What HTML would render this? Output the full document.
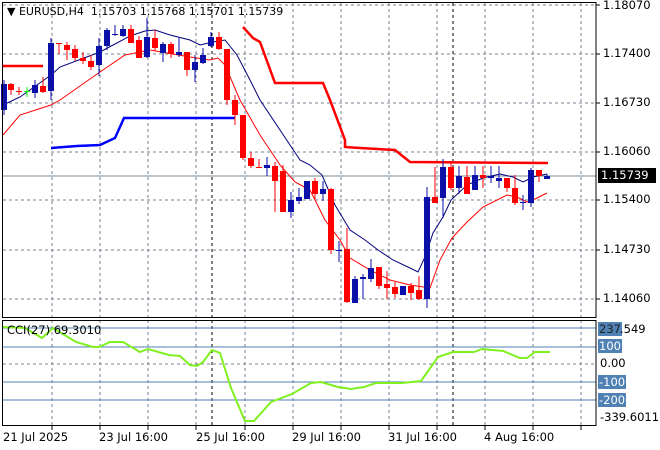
<!DOCTYPE html>
<html><head><meta charset="utf-8"><style>
body{margin:0;background:#fff;width:660px;height:450px;overflow:hidden;font-family:"DejaVu Sans","Liberation Sans",sans-serif;}
.t{position:absolute;font-size:11.5px;color:#000;white-space:nowrap;line-height:13px}
.lb{position:absolute;font-size:11.5px;color:#fff;background:#4f81b4;line-height:14px;padding:0 1px}
</style></head><body>
<svg id="s" width="660" height="450" style="position:absolute;left:0;top:0" shape-rendering="crispEdges"></svg>
<div class="t" style="left:7px;top:5px;font-size:11px">&#9660; EURUSD,H4&nbsp; 1.15703 1.15768 1.15701 1.15739</div>
<div class="t" style="left:603px;top:-1px">1.18070</div>
<div class="t" style="left:603px;top:47px">1.17400</div>
<div class="t" style="left:603px;top:96px">1.16730</div>
<div class="t" style="left:603px;top:145px">1.16060</div>
<div class="t" style="left:603px;top:193px">1.15400</div>
<div class="t" style="left:603px;top:243px">1.14730</div>
<div class="t" style="left:603px;top:292px">1.14060</div>
<div class="t" style="left:598px;top:168px;background:#000;color:#fff;padding:1px 3px;width:52px">1.15739</div>
<div class="t" style="left:7px;top:324px">CCI(27) 69.3010</div>
<div class="lb" style="left:598px;top:322px;color:#222">237</div>
<div class="t" style="left:620px;top:323px">.549</div>
<div class="lb" style="left:598px;top:339px">100</div>
<div class="t" style="left:600px;top:357px">0.00</div>
<div class="lb" style="left:598px;top:375px">-100</div>
<div class="lb" style="left:598px;top:393px">-200</div>
<div class="t" style="left:600px;top:411px">-339.6011</div>
<div class="t" style="left:3px;top:431px">21 Jul 2025</div>
<div class="t" style="left:99px;top:431px">23 Jul 16:00</div>
<div class="t" style="left:196px;top:431px">25 Jul 16:00</div>
<div class="t" style="left:292px;top:431px">29 Jul 16:00</div>
<div class="t" style="left:388px;top:431px">31 Jul 16:00</div>
<div class="t" style="left:484px;top:431px">4 Aug 16:00</div>
<script>
var h='';
var gx=[52,100,148,196,245,293,341,389,437,485,533,581];
var gy=[5,54,103,152,200,250,299];
gx.forEach(function(x){h+='<line x1="'+x+'" y1="3" x2="'+x+'" y2="317" stroke="#7a8290" stroke-dasharray="3,3"/>';h+='<line x1="'+x+'" y1="320" x2="'+x+'" y2="425" stroke="#7a8290" stroke-dasharray="3,3"/>';h+='<line x1="'+x+'" y1="425" x2="'+x+'" y2="430" stroke="#000"/>';});
gy.forEach(function(y){h+='<line x1="3" y1="'+y+'" x2="596" y2="'+y+'" stroke="#7a8290" stroke-dasharray="3,3"/><line x1="596" y1="'+y+'" x2="600" y2="'+y+'" stroke="#000"/>';});
[212,453].forEach(function(x){h+='<line x1="'+x+'" y1="3" x2="'+x+'" y2="317" stroke="#000" stroke-dasharray="3,3"/><line x1="'+x+'" y1="320" x2="'+x+'" y2="425" stroke="#000" stroke-dasharray="3,3"/>';});
h+='<line x1="3" y1="176" x2="596" y2="176" stroke="#7a8a9a"/>';
[328,347,382,400].forEach(function(y){h+='<line x1="3" y1="'+y+'" x2="596" y2="'+y+'" stroke="#4f81b4"/>';});
h+='<line x1="3" y1="364" x2="596" y2="364" stroke="#7a8290" stroke-dasharray="3,3"/>';
function pl(p,c,w){h+='<polyline fill="none" stroke="'+c+'" stroke-width="'+w+'" shape-rendering="auto" points="'+p+'"/>';}
pl('3,105 20,97 51,75 60,67 100,52 130,36 145,31 155,30 170,35 190,40 200,45 213,42 225,40 237,55 250,80 260,100 280,130 290,145 300,160 310,165 322,175 335,205 350,230 365,240 378,250 393,260 410,268 418,272 425,257 433,233 443,217 451,200 467,185 483,178 500,174 513,177 523,182 533,177 547,174','#00007a',1);
pl('3,135 20,115 51,105 60,100 100,72 125,55 150,50 190,57 210,60 218,58 225,65 240,100 260,135 280,165 295,182 310,190 325,220 340,240 350,258 370,270 390,280 410,285 430,288 440,260 452,238 467,222 483,207 507,195 517,197 527,202 533,200 547,193','#ff0000',1);
pl('3,66 43,66','#ff0000',2.5);
pl('243,27 253,38 260,42 275,83 323,83 330,100 345,140 345,147 360,148 395,150 410,162 548,163','#ff0000',2.5);
pl('51,148 77,146 100,145 115,138 124,118 235,118','#0000ff',2.5);
var C=[[4,'b',84,110,80,115],[11,'r',84,90,83,95],[19,'r',91,91,87,95],[27,'g',91,91,87,97],[35,'b',85,93,80,98],[43,'r',86,92,77,93],[51,'b',43,91,38,100],[59,'r',43,44,43,54],[67,'r',45,50,42,60],[75,'r',49,58,45,61],[83,'r',58,61,52,64],[91,'r',61,67,55,70],[99,'b',46,65,38,76],[107,'b',30,46,28,50],[115,'b',34,35,25,36],[123,'b',29,36,25,37],[131,'r',29,43,25,43],[139,'r',40,58,36,58],[147,'b',37,57,18,58],[155,'r',38,48,30,51],[163,'b',44,53,42,62],[171,'r',44,54,42,58],[179,'b',52,55,38,57],[187,'r',52,70,52,76],[195,'b',62,70,55,82],[203,'b',55,63,48,64],[211,'b',37,46,32,47],[219,'r',37,49,32,50],[227,'r',49,100,49,105],[235,'r',100,115,95,125],[243,'r',115,158,115,160],[251,'r',158,166,152,168],[259,'r',167,168,159,168],[267,'b',165,168,157,176],[275,'r',166,181,162,212],[283,'r',171,212,165,212],[291,'b',200,212,192,218],[299,'b',197,201,188,204],[307,'b',181,199,181,199],[315,'r',181,194,178,199],[323,'b',189,194,181,201],[331,'r',189,250,188,254],[339,'b',250,250,241,262],[347,'r',249,302,228,303],[355,'b',279,303,276,303],[363,'b',277,279,274,299],[371,'b',268,279,259,282],[379,'r',267,286,267,289],[387,'r',284,288,271,299],[395,'r',287,294,282,298],[403,'b',286,295,286,295],[411,'r',286,293,283,300],[419,'r',290,299,276,300],[427,'b',197,299,187,308],[435,'r',197,203,167,203],[443,'b',167,198,159,218],[451,'r',167,188,162,190],[459,'b',176,188,166,194],[467,'r',177,194,166,194],[475,'b',175,190,166,190],[483,'r',175,178,166,188],[491,'b',176,178,166,183],[499,'b',178,181,166,188],[507,'r',178,188,178,192],[515,'r',188,203,175,205],[523,'b',202,203,195,210],[531,'b',170,203,168,207],[539,'r',170,176,170,182],[547,'b',176,179,174,179]];
C.forEach(function(c){var col=c[1]=='b'?'#0a10a8':(c[1]=='r'?'#ff0000':'#00ff00');h+='<line x1="'+c[0]+'" y1="'+c[4]+'" x2="'+c[0]+'" y2="'+c[5]+'" stroke="'+col+'"/>';var hh=Math.max(1,c[3]-c[2]);h+='<rect x="'+(c[0]-3)+'" y="'+c[2]+'" width="6" height="'+hh+'" fill="'+col+'"/>';});
pl('3,327 25,328 42,338 53,328 76,342 93,347 99,347 110,342 123,342 140,352 148,349 169,355 180,356 190,365 197,366 203,362 212,350 220,353 231,388 245,421 254,421 271,402 292,394 311,383 321,382 338,387 351,389 364,387 376,383 402,383 421,381 438,357 453,352 474,352 482,349 503,351 520,358 527,358 535,352 550,352','#80f020',2);
h+='<rect x="2.5" y="2.5" width="593.5" height="315" fill="none" stroke="#000"/>';
h+='<rect x="2.5" y="320.5" width="593.5" height="105" fill="none" stroke="#000"/>';
document.getElementById('s').innerHTML=h;
</script>
</body></html>
